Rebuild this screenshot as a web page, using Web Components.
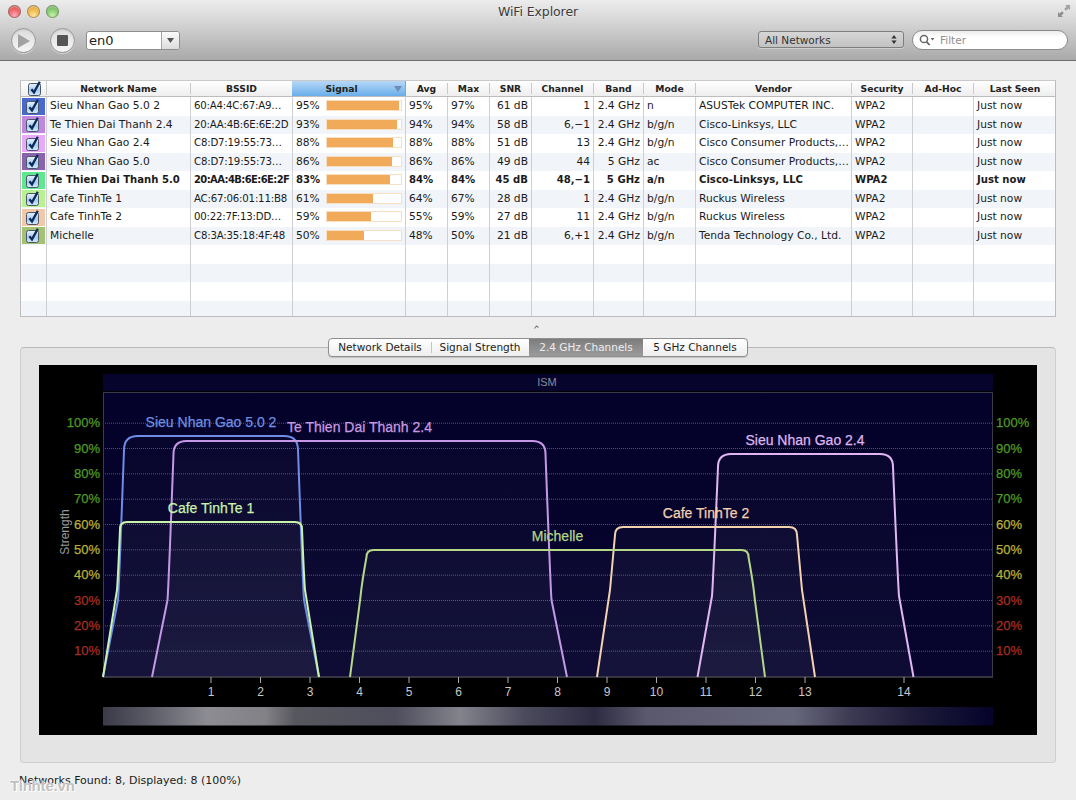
<!DOCTYPE html>
<html lang="en"><head><meta charset="utf-8"><title>WiFi Explorer</title>
<style>
html,body{margin:0;padding:0;background:#ededed}
body{width:1076px;height:800px;overflow:hidden;font:10.5px "DejaVu Sans",sans-serif;color:#1c1c1c}
</style></head><body>
<wifi-window>
  <mac-toolbar slot="toolbar"></mac-toolbar>
  <network-table></network-table>
  <split-handle></split-handle>
  <tab-panel>
    <tab-bar slot="tabs">
      <tab-seg w="102">Network Details</tab-seg>
      <tab-seg w="98" sep>Signal Strength</tab-seg>
      <tab-seg w="114" active>2.4 GHz Channels</tab-seg>
      <tab-seg w="104">5 GHz Channels</tab-seg>
    </tab-bar>
    <channel-chart></channel-chart>
  </tab-panel>
  <status-line>Networks Found: 8, Displayed: 8 (100%)</status-line>
  <water-mark>Tinhte.vn</water-mark>
</wifi-window>
<script>
function def(name, html, init){
  customElements.define(name, class extends HTMLElement{
    constructor(){super();const r=this.attachShadow({mode:'open'});r.innerHTML=typeof html==='function'?html(this):html;}
    connectedCallback(){ if(init&&!this._d){this._d=1;init(this,this.shadowRoot);} }
  });
}
def('wifi-window',`<style>:host{display:flex;flex-direction:column;width:1076px;height:800px;position:relative;overflow:hidden;background:#ededed;border-radius:5px 5px 0 0}</style><slot name="toolbar"></slot><slot></slot>`);

def('traffic-light',h=>`<style>:host{display:block;width:13px;height:13px;border-radius:50%;border:0;box-sizing:border-box;
 background:radial-gradient(circle at 50% 78%,${h.getAttribute('c2')} 0,${h.getAttribute('c1')} 55%,${h.getAttribute('c0')} 100%);box-shadow:inset 0 0 0 1px rgba(70,70,70,.45),inset 0 2px 2px rgba(255,255,255,.5)}</style>`);

def('round-button',`<style>:host{display:flex;align-items:center;justify-content:center;width:25px;height:25px;border-radius:50%;
 background:linear-gradient(#dcdcdc,#f6f6f6);border:1px solid #9a9a9a;box-sizing:border-box;box-shadow:0 1px 1px rgba(255,255,255,.45),inset 0 1px 2px rgba(0,0,0,.1)}</style><slot></slot>`);

def('combo-box',`<style>:host{display:flex;width:94px;height:19px;box-sizing:border-box;border:1px solid #8d8d8d;border-radius:3px;background:#fff;overflow:hidden;font:13px "DejaVu Sans",sans-serif;color:#222}
.t{flex:1;padding:1px 0 0 2px;line-height:16px}.a{width:17px;border-left:1px solid #a5a5a5;background:linear-gradient(#fbfbfb,#dcdcdc);display:flex;align-items:center;justify-content:center}</style>
<div class="t"><slot></slot></div><div class="a"><svg width="7" height="5"><path d="M0 0H7L3.5 5Z" fill="#555"/></svg></div>`);

def('pop-up',`<style>:host{display:flex;align-items:center;justify-content:space-between;width:146px;height:17px;margin-bottom:2px;box-sizing:border-box;border:1px solid #7e7e7e;border-radius:3px;background:linear-gradient(#d6d6d6,#c2c2c2);padding:0 6px;font:10.5px "DejaVu Sans",sans-serif;color:#333;box-shadow:0 1px 0 rgba(255,255,255,.35)}</style>
<slot></slot><svg width="6" height="9"><path d="M3 0L5.6 3.4H.4ZM3 9L.4 5.6H5.6Z" fill="#333"/></svg>`);

def('search-field',`<style>:host{display:flex;align-items:center;width:156px;height:20px;margin-bottom:2px;box-sizing:border-box;border:1px solid #8b8b8b;border-radius:10px;background:linear-gradient(#ececec,#fff 35%);padding-left:6px;font:10.5px "DejaVu Sans",sans-serif;color:#8f8f8f;gap:5px}</style>
<svg width="16" height="12" viewBox="0 0 16 12"><circle cx="5" cy="5" r="3.6" fill="none" stroke="#666" stroke-width="1.5"/><path d="M7.6 7.8L10.6 11" stroke="#666" stroke-width="1.8"/><path d="M11.5 4H15.5L13.5 6.4Z" fill="#666"/></svg><slot></slot>`);

def('mac-toolbar',`<style>:host{display:block;height:61px;box-sizing:border-box;background:linear-gradient(#ececec 0,#dcdcdc 16px,#a9a9a9 100%);border-bottom:1px solid #6f6f6f;color:#333}
.title{display:flex;height:21px;align-items:center;padding:1px 5px 0 8px}
.lights{display:flex;gap:6px;width:167px}
.name{flex:1;text-align:center;font:12.5px "DejaVu Sans",sans-serif;color:#3b3b3b;text-shadow:0 1px 0 rgba(255,255,255,.5);letter-spacing:-.1px}
.rs{width:170px;text-align:right;height:16px}
.bar{display:flex;align-items:center;height:27px;padding:0 8px 0 11px;margin-top:5px}
.g{width:14px}.g2{width:11px}.sp{flex:1}.g3{width:8px}</style>
<div class="title"><div class="lights"><traffic-light c0="#a72a2a" c1="#e8595a" c2="#fab"></traffic-light><traffic-light c0="#b47b17" c1="#eeb13f" c2="#fde39c"></traffic-light><traffic-light c0="#3f8a2b" c1="#7cc463" c2="#c7f2ae"></traffic-light></div>
<div class="name">WiFi Explorer</div>
<div class="rs"><svg width="14" height="14" viewBox="0 0 14 14"><path d="M8 1H13V6L11.4 4.4 9 6.8 7.2 5 9.6 2.6Z" fill="#a2a2a2"/><path d="M6 13H1V8L2.6 9.6 5 7.2 6.8 9 4.4 11.4Z" fill="#8e8e8e"/></svg></div></div>
<div class="bar">
<round-button><svg width="13" height="14"><path d="M1 0L13 7 1 14Z" fill="#a2a2a2"/></svg></round-button><div class="g"></div>
<round-button><svg width="11" height="11"><rect width="11" height="11" rx="1" fill="#555"/></svg></round-button><div class="g2"></div>
<combo-box>en0</combo-box><div class="sp"></div>
<pop-up>All Networks</pop-up><div class="g3"></div><search-field>Filter</search-field></div>`);

def('check-box',`<style>:host{display:block;width:17px;height:17px}</style><svg width="17" height="17" viewBox="0 0 17 17"><defs><linearGradient id="g" x1="0" y1="0" x2="0" y2="1"><stop offset="0" stop-color="#e8f2fc"/><stop offset=".55" stop-color="#a8cdf1"/><stop offset="1" stop-color="#d6e9fb"/></linearGradient></defs><rect x="1.5" y="3.5" width="12" height="12" rx="2" fill="url(#g)" stroke="#4a5566"/><path d="M4.4 9.2L7 12.4 12.8 1.8" fill="none" stroke="#0c2a5c" stroke-width="2.3"/></svg>`);

const COLS='26px 144px 102px 113px 42px 42px 42px 62px 50px 52px 156px 61px 61px 82px';
def('table-header',`<style>:host{display:grid;grid-template-columns:${COLS};height:15px;background:linear-gradient(#fff,#eee);border-bottom:1px solid #bdbdbd;font:bold 9.2px "DejaVu Sans",sans-serif;color:#222;line-height:14px;text-align:center;box-sizing:content-box}
div{position:relative;border-right:1px solid #c9c9c9;box-sizing:border-box;height:11px;margin-top:2px;line-height:11px;white-space:nowrap}
.ck{padding-left:6px;margin-top:-1px;height:15px;overflow:visible}
.s{height:15px;margin:0 0 0 -1px;line-height:15px;border-right:1px solid #7aa6d0;background:linear-gradient(#b7d8f7,#68aee9);padding-right:14px}
.s svg{position:absolute;right:3px;top:5px}
.l{border-right:0}</style>
<div class="ck"><check-box></check-box></div><div>Network Name</div><div>BSSID</div><div class="s">Signal<svg width="8" height="6"><path d="M0 0H8L4 6Z" fill="#6d8db8"/></svg></div><div>Avg</div><div>Max</div><div>SNR</div><div>Channel</div><div>Band</div><div>Mode</div><div>Vendor</div><div>Security</div><div>Ad-Hoc</div><div class="l">Last Seen</div>`);

def('signal-bar',`<style>:host{display:block;width:77px;height:11px;box-sizing:border-box;border:1px solid #f6dfc2;background:#fff;margin-top:3px;overflow:hidden}
i{display:block;height:100%;background:#f0aa59}</style><i></i>`,(h,r)=>{r.querySelector('i').style.width=(h.getAttribute('v')*.77-1)+'px'});

function rowHtml(h){
 const d=h.data||[];const b=d[14];return `<style>:host{display:grid;grid-template-columns:${COLS};height:18.5px;background:var(--bg,#fff);font:${b?'bold 10.1px':'10.7px'}/17.5px "DejaVu Sans",sans-serif;color:#1b1b1b}
 .c{padding:0 3px;border-right:1px solid #cfcfd3;white-space:nowrap;overflow:hidden;box-sizing:border-box;min-width:0}
 .r{text-align:right}.sw{padding:0;position:relative}.chip{margin:.5px 0 0 1px;width:23px;height:17px;display:flex;align-items:center;justify-content:center}
 .sig{display:flex;gap:0;padding-left:3px}.sig span{width:30px}
 .bssid{padding:0 0 0 3px;${b?'font-size:10px;letter-spacing:-.6px':'font-size:10.2px;letter-spacing:-.2px'}}
 .l{border-right:0}</style>
 <div class="c sw">${d[0]?`<div class="chip" style="background:${d[0]}"><check-box></check-box></div>`:''}</div>
 <div class="c">${d[1]||''}</div><div class="c bssid">${d[2]||''}</div>
 <div class="c sig">${d[3]?`<span>${d[3]}%</span><signal-bar v="${d[3]}"></signal-bar>`:''}</div>
 <div class="c">${d[4]?d[4]+'%':''}</div><div class="c">${d[5]?d[5]+'%':''}</div><div class="c r">${d[6]?d[6]+' dB':''}</div>
 <div class="c r">${d[7]||''}</div><div class="c r">${d[8]||''}</div><div class="c">${d[9]||''}</div>
 <div class="c">${d[10]||''}</div><div class="c">${d[11]||''}</div><div class="c"></div><div class="c l">${d[12]||''}</div>`;}

const NETS=[
['#4a69cf','Sieu Nhan Gao 5.0 2','60:A4:4C:67:A9…',95,95,97,61,'1','2.4 GHz','n','ASUSTek COMPUTER INC.','WPA2','Just now'],
['#bf88df','Te Thien Dai Thanh 2.4','20:AA:4B:6E:6E:2D',93,94,94,58,'6,−1','2.4 GHz','b/g/n','Cisco-Linksys, LLC','WPA2','Just now'],
['#e8a9f8','Sieu Nhan Gao 2.4','C8:D7:19:55:73…',88,88,88,51,'13','2.4 GHz','b/g/n','Cisco Consumer Products,…','WPA2','Just now'],
['#8a63ad','Sieu Nhan Gao 5.0','C8:D7:19:55:73…',86,86,86,49,'44','5 GHz','ac','Cisco Consumer Products,…','WPA2','Just now'],
['#5fe88f','Te Thien Dai Thanh 5.0','20:AA:4B:6E:6E:2F',83,84,84,45,'48,−1','5 GHz','a/n','Cisco-Linksys, LLC','WPA2','Just now',0,1],
['#b9f092','Cafe TinhTe 1','AC:67:06:01:11:B8',61,64,67,28,'1','2.4 GHz','b/g/n','Ruckus Wireless','WPA2','Just now'],
['#f1c9a8','Cafe TinhTe 2','00:22:7F:13:DD…',59,55,59,27,'11','2.4 GHz','b/g/n','Ruckus Wireless','WPA2','Just now'],
['#a3c273','Michelle','C8:3A:35:18:4F:48',50,48,50,21,'6,+1','2.4 GHz','b/g/n','Tenda Technology Co., Ltd.','WPA2','Just now']];
def('network-table',`<style>:host{display:block;margin:19px 20px 0;height:237px;box-sizing:border-box;border:1px solid #bcbcbc;border-top-color:#c9c9c9;background:#fff;overflow:hidden}</style><table-header></table-header><div id="b"></div>`,(h,r)=>{
  const b=r.getElementById('b');
  for(let i=0;i<12;i++){
    const e=document.createElement('table-row');
    e.setAttribute('i',i);
    e.style.setProperty('--bg',i%2?'#f1f5fa':'#fff');
    b.appendChild(e);
  }
});
customElements.define('table-row',class extends HTMLElement{
  connectedCallback(){
    const i=+this.getAttribute('i');const n=NETS[i];
    this.data=n?n.slice():[];
    this.attachShadow({mode:'open'}).innerHTML=rowHtml(this);
  }
});

def('split-handle',`<style>:host{display:flex;height:21px;align-items:center;justify-content:center;box-sizing:border-box;padding:0 3px 1px 0}</style><svg width="5" height="4"><path d="M.5 3.5L2.5 1 4.5 2.5" fill="none" stroke="#777" stroke-width="1.1"/></svg>`);

def('tab-seg',h=>`<style>:host{display:block;width:${h.getAttribute('w')}px;box-sizing:border-box;text-align:center;font:10.5px/17px "DejaVu Sans",sans-serif;white-space:nowrap;color:${h.hasAttribute('active')?'#eee':'#1d1d1d'};position:relative;${h.hasAttribute('active')?'background:linear-gradient(#7d7d7d,#9b9b9b);':''}}
</style><slot></slot>`);
def('tab-bar',`<style>:host{display:flex;width:420px;height:19px;box-sizing:border-box;border:1px solid #8e8e8e;border-radius:4px;background:linear-gradient(#fff,#eee);overflow:hidden;box-shadow:0 1px 1px rgba(0,0,0,.15);position:relative}
i{position:absolute;left:102px;top:3px;height:11px;width:1px;background:#c4c4c4}</style><slot></slot><i></i>`);
def('tab-panel',`<style>:host{display:block;margin:0 20px;height:425px;position:relative}
.box{position:absolute;left:0;right:0;top:9px;bottom:0;background:#e4e4e4;border:1px solid #cfcfcf;border-top-color:#b9b9b9;border-radius:4px;box-sizing:border-box}
.tabs{position:relative;display:flex;justify-content:center;height:27px}
.body{position:relative;padding:0 19px}</style>
<div class="box"></div><div class="tabs"><slot name="tabs"></slot></div><div class="body"><slot></slot></div>`);

def('status-line',`<style>:host{display:block;font:11px "DejaVu Sans",sans-serif;color:#1b1b1b;padding:10px 0 0 19px;line-height:15px;white-space:nowrap}</style><slot></slot>`);
def('water-mark',`<style>:host{position:absolute;left:10px;top:777px;font:bold 15px "Liberation Sans",sans-serif;color:rgba(185,185,185,.9);text-shadow:0 0 1px #fff,0 0 2px #fff,1px 1px 0 #fff;letter-spacing:-.2px}</style><slot></slot>`);

function curve(c){
  const [cx,hb,hs,sy,ht,ty,r]=c;
  const L=x=>cx-x,R=x=>cx+x,by=677;
  return `M${L(hb)} ${by}L${L(hs)} ${sy}Q${L(hs-1)} ${sy-12} ${L(ht)} ${ty+r}Q${L(ht)} ${ty} ${L(ht-r)} ${ty}L${R(ht-r)} ${ty}Q${R(ht)} ${ty} ${R(ht)} ${ty+r}Q${R(hs-1)} ${sy-12} ${R(hs)} ${sy}L${R(hb)} ${by}`;
}
const CURVES=[
 {d:[211,108,93,600,87,436,14],col:'#6e8ee6'},
 {d:[359.5,207.5,192,600,186,441,13],col:'#c598e6'},
 {d:[805.5,108,93.5,596,87.5,454,13],col:'#e1b6f3'},
 {d:[706,109,96,590,91,527,8],col:'#f3d2b0'},
 {d:[557.5,207.5,197,597,191,550,7],col:'#b4d788'},
 {d:[211,108,94,590,91,522,7],col:'#c9f3ab'}];
const LBL=[['Sieu Nhan Gao 5.0 2',211,427,'#6f8fe0'],['Te Thien Dai Thanh 2.4',359.5,432,'#c79be3'],['Sieu Nhan Gao 2.4',805,445,'#dfb5f1'],['Cafe TinhTe 1',211,513,'#c9f2ac'],['Cafe TinhTe 2',706,518,'#f2d1b0'],['Michelle',557.5,541,'#b4d788']];
function chart(){
  const gy=p=>676.5-p*2.533;
  let s='';
  for(let p=10;p<=100;p+=10){
    const y=gy(p),col=p>=70?'#4f9a25':p>=40?'#b9b138':'#a82e20';
    s+=`<line x1="103" x2="993" y1="${y}" y2="${y}" stroke="#8a8a99" stroke-width="1" stroke-dasharray="1 1" opacity=".6"/>`;
    s+=`<text x="100" y="${y+4}" text-anchor="end" fill="${col}" stroke="${col}" stroke-width=".25" class="p">${p}%</text><text x="996" y="${y+4}" fill="${col}" stroke="${col}" stroke-width=".25" class="p">${p}%</text>`;
  }
  let f='';
  for(const c of CURVES){f+=`<path d="${curve(c.d)}Z" fill="url(#fill)"/>`;}
  let st='';
  for(const c of CURVES){st+=`<path d="${curve(c.d)}" fill="none" stroke="${c.col}" stroke-width="2"/>`;}
  let t='';
  for(let i=1;i<=14;i++){const x=i==14?904:211+(i-1)*49.5;
    t+=`<line x1="${x}" x2="${x}" y1="677" y2="683" stroke="#aaa"/><text x="${x}" y="696" text-anchor="middle" class="t">${i}</text>`;}
  const stops=[[103,'#3a3a48'],[150,'#5c5c68'],[207,'#8c8c92'],[266,'#818186'],[295,'#57575e'],[395,'#4e4e5d'],[460,'#83838c'],[524,'#4b4b5d'],[595,'#2e2c42'],[647,'#5b596d'],[794,'#67677b'],[853,'#3b3952'],[911,'#1f1d3a'],[988,'#06042b'],[993,'#06042b']]
    .map(([x,c])=>`<stop offset="${(x-103)/890}" stop-color="${c}"/>`).join('');
  return `<style>:host{display:block;width:998px;height:370px;background:#000}
  svg{display:block}text{font-family:"Liberation Sans",sans-serif}.p{font-size:13px}.t{font-size:12px;fill:#c8c8c8}.n{font-size:14px;stroke-width:.25}</style>
  <svg width="998" height="370" viewBox="39 365 998 370">
  <defs><linearGradient id="bg" x1="0" y1="0" x2="0" y2="1"><stop offset="0" stop-color="#04022a"/><stop offset="1" stop-color="#07052e"/></linearGradient>
  <linearGradient id="fill" gradientUnits="userSpaceOnUse" x1="0" y1="430" x2="0" y2="677"><stop offset="0" stop-color="#fff" stop-opacity=".012"/><stop offset="1" stop-color="#fff" stop-opacity=".03"/></linearGradient>
  <linearGradient id="sp">${stops}</linearGradient></defs>
  <rect x="103" y="374" width="890" height="17" fill="#06042c"/>
  <text x="547" y="386" text-anchor="middle" font-size="11" fill="#8d8d96">ISM</text>
  <rect x="103" y="392" width="890" height="285" fill="url(#bg)"/>
  ${f}${s}
  <path d="M103.5 677V392.5H992.5V677" fill="none" stroke="#3a3a48"/><line x1="103" x2="993" y1="677" y2="677" stroke="#45454f" stroke-width="1.4"/>
  ${st}${t}
  ${LBL.map(l=>`<text x="${l[1]}" y="${l[2]}" text-anchor="middle" class="n" fill="${l[3]}" stroke="${l[3]}">${l[0]}</text>`).join('')}
  <text transform="translate(69 532) rotate(-90)" text-anchor="middle" font-size="12" fill="#9a9a9a">Strength</text>
  <rect x="103" y="707" width="890" height="18.5" fill="url(#sp)"/>
  </svg>`;
}
def('channel-chart',chart);
</script>
</body></html>
